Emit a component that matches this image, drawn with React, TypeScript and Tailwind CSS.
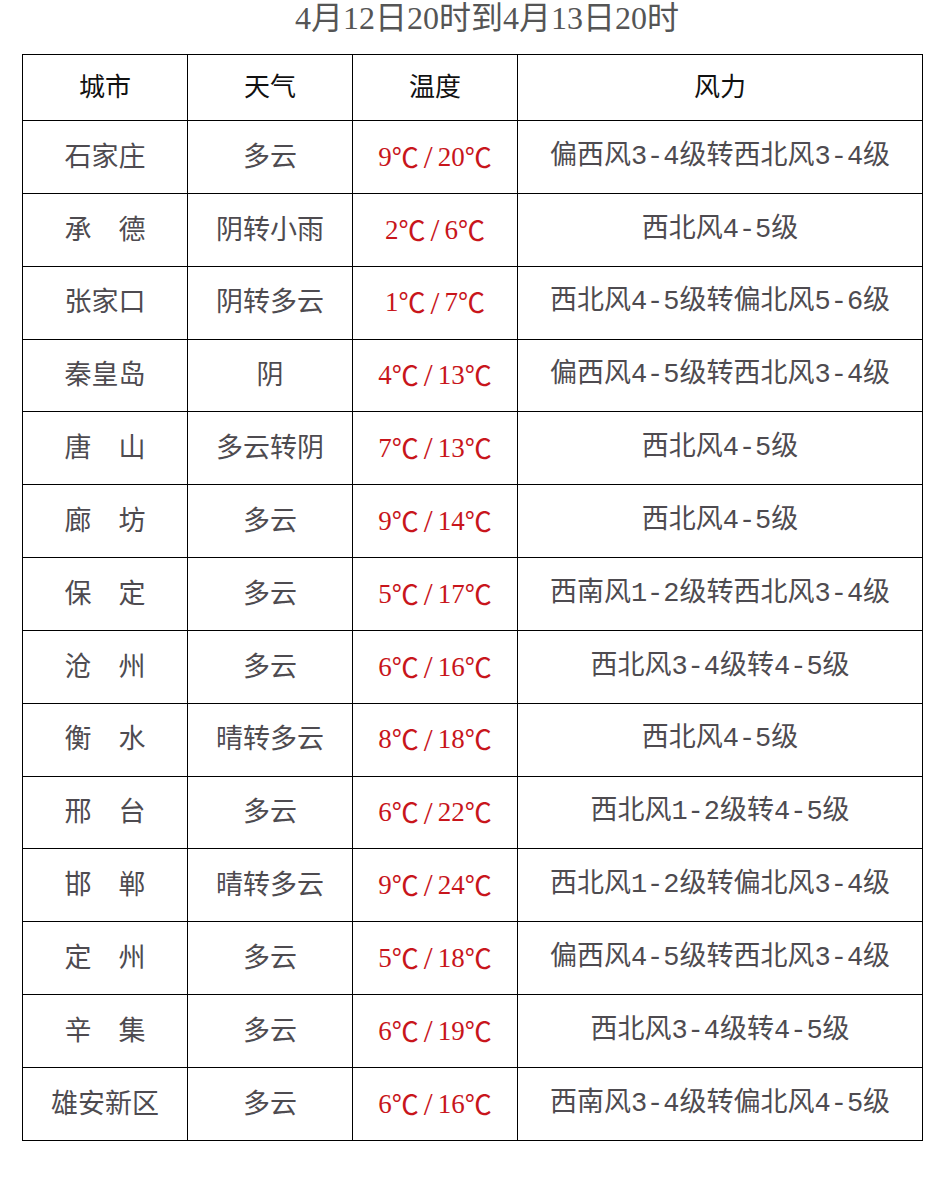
import React from "react";

const rows: [string, string, string, string, string][] = [
  ["石家庄", "多云", "9", "20", "偏西风3-4级转西北风3-4级"],
  ["承　德", "阴转小雨", "2", "6", "西北风4-5级"],
  ["张家口", "阴转多云", "1", "7", "西北风4-5级转偏北风5-6级"],
  ["秦皇岛", "阴", "4", "13", "偏西风4-5级转西北风3-4级"],
  ["唐　山", "多云转阴", "7", "13", "西北风4-5级"],
  ["廊　坊", "多云", "9", "14", "西北风4-5级"],
  ["保　定", "多云", "5", "17", "西南风1-2级转西北风3-4级"],
  ["沧　州", "多云", "6", "16", "西北风3-4级转4-5级"],
  ["衡　水", "晴转多云", "8", "18", "西北风4-5级"],
  ["邢　台", "多云", "6", "22", "西北风1-2级转4-5级"],
  ["邯　郸", "晴转多云", "9", "24", "西北风1-2级转偏北风3-4级"],
  ["定　州", "多云", "5", "18", "偏西风4-5级转西北风3-4级"],
  ["辛　集", "多云", "6", "19", "西北风3-4级转4-5级"],
  ["雄安新区", "多云", "6", "16", "西南风3-4级转偏北风4-5级"],
];

const serif = { fontFamily: '"Liberation Serif", "Noto Sans CJK SC", serif' };
const cjk = { fontFamily: '"Noto Sans CJK SC", sans-serif' };
const mono = { fontFamily: '"Liberation Mono", "Noto Sans CJK SC", monospace' };

const cell =
  "h-[72.85px] border-r-[1.5px] border-b-[1.5px] border-black flex items-center justify-center text-[27px] whitespace-nowrap";

export default function App() {
  return (
    <div className="w-[942px] h-[1185px] bg-white overflow-hidden" style={serif}>
      <div className="pt-[1px] pl-[32px] text-center text-[32px] leading-[34px] text-[#555]">
        4月12日20时到4月13日20时
      </div>
      <div className="mt-[19px] ml-[22px] w-[901px] border-t-[1.5px] border-l-[1.5px] border-black grid grid-cols-[165px_165px_165px_405px]">
        {["城市", "天气", "温度", "风力"].map((h) => (
          <div
            key={h}
            className="h-[66px] border-r-[1.5px] border-b-[1.5px] border-black flex items-center justify-center text-[26px] text-[#111] font-normal"
          >
            {h}
          </div>
        ))}
        {rows.map((r, i) => (
          <React.Fragment key={i}>
            <div className={`${cell} text-[#4e4b50]`}>{r[0]}</div>
            <div className={`${cell} text-[#4e4b50]`}>{r[1]}</div>
            <div className={`${cell} text-[#c8151b]`}>
              <span>{r[2]}</span>
              <span style={cjk}>℃</span>
              <span className="px-[5px] text-[32px] leading-none">/</span>
              <span>{r[3]}</span>
              <span style={cjk}>℃</span>
            </div>
            <div className={`${cell} text-[#4e4b50]`} style={mono}>
              {r[4]}
            </div>
          </React.Fragment>
        ))}
      </div>
    </div>
  );
}
